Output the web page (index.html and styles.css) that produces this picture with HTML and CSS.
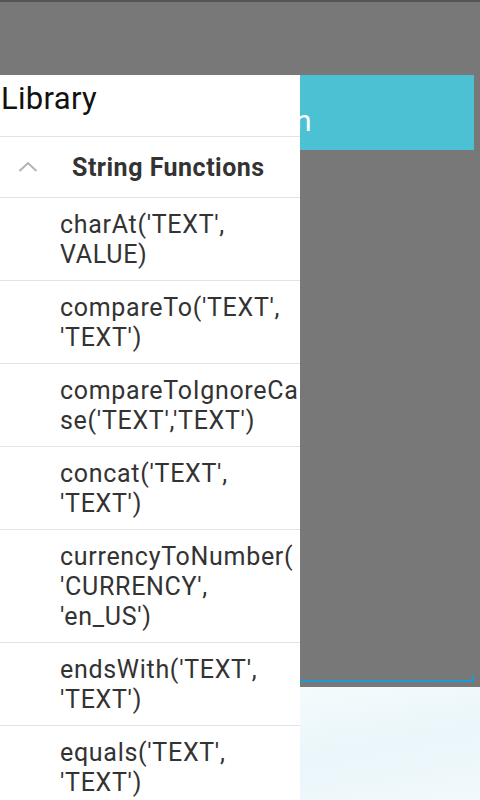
FILE: index.html
```html
<!DOCTYPE html>
<html lang="en">
<head>
  <meta charset="UTF-8">
  <meta name="viewport" content="width=device-width, initial-scale=1.0">
  <title>Library</title>
  <link rel="stylesheet" href="styles.css">
</head>
<body>
  <div class="screen">
    <div class="status"></div>
    <div class="main">
      <!-- drawer, half slid in -->
      <div class="drawer">
        <div class="drawer-title">Library</div>
        <div class="group">
          <svg class="chevron" width="20" height="12" viewBox="0 0 20 12">
            <polyline points="1.5,10 10,2 18.5,10" fill="none" stroke="#b3b3b3" stroke-width="2"/>
          </svg>
          <span class="group-name">String Functions</span>
        </div>
        <div class="item">charAt('TEXT',<br>VALUE)</div>
        <div class="item">compareTo('TEXT',<br>'TEXT')</div>
        <div class="item">compareToIgnoreCa<br>se('TEXT','TEXT')</div>
        <div class="item">concat('TEXT',<br>'TEXT')</div>
        <div class="item">currencyToNumber(<br>'CURRENCY',<br>'en_US')</div>
        <div class="item">endsWith('TEXT',<br>'TEXT')</div>
        <div class="item">equals('TEXT',<br>'TEXT')</div>
      </div>

      <div class="content">
        <div class="toolbar"><span class="toolbar-text">n</span></div>
        <div class="editor"></div>
        <div class="footer-area"></div>
      </div>
    </div>
  </div>
</body>
</html>
```

FILE: styles.css
```css
body {
  margin: 0;
  font-family: 'Roboto', 'Liberation Sans', sans-serif;
  background-color: #787878;
}
.screen {
  width: 480px;
  height: 800px;
  display: flex;
  flex-direction: column;
  overflow: hidden;
}
.status {
  height: 75px;
  flex-shrink: 0;
  border-top: 2px solid #555;
  box-sizing: border-box;
  background-color: #787878;
}
.main {
  flex: 1;
  display: flex;
  min-height: 0;
}
.drawer {
  width: 300px;
  flex-shrink: 0;
  background-color: #fff;
  overflow: hidden;
}
.drawer-title {
  height: 61px;
  padding-left: 1px;
  font-size: 31px;
  line-height: 48px;
  letter-spacing: 0.3px;
  color: #111;
  border-bottom: 1px solid #e3e3e3;
}
.group {
  height: 60px;
  display: flex;
  align-items: center;
  border-bottom: 1px solid #e3e3e3;
}
.chevron {
  margin-left: 18px;
  margin-right: 34px;
}
.group-name {
  font-size: 25px;
  font-weight: bold;
  letter-spacing: 0.5px;
  color: #333;
}
.item {
  padding: 12px 0 10px 60px;
  font-size: 25px;
  line-height: 30px;
  letter-spacing: 0.7px;
  color: #333;
  white-space: nowrap;
  border-bottom: 1px solid #e3e3e3;
}
.content {
  flex: 1;
  display: flex;
  flex-direction: column;
}
.toolbar {
  height: 75px;
  margin-right: 6px;
  background-color: #4bc1d3;
  overflow: hidden;
  display: flex;
  align-items: flex-end;
}
.toolbar-text {
  margin-left: -5px;
  margin-bottom: 14px;
  font-size: 30px;
  line-height: 30px;
  color: #fff;
}
.editor {
  height: 537px;
  margin-right: 6px;
  box-sizing: border-box;
  border-bottom: 5px solid #787878;
  position: relative;
}
.editor::after {
  content: '';
  position: absolute;
  left: 0;
  right: 0;
  bottom: 0;
  height: 7px;
  border-bottom: 2px solid #1b9bd1;
  border-right: 2px solid #1b9bd1;
  box-sizing: border-box;
}
.footer-area {
  flex: 1;
  background: linear-gradient(170deg, #f4fbfd 0%, #eaf6fa 50%, #f1f9fc 100%);
}
```
